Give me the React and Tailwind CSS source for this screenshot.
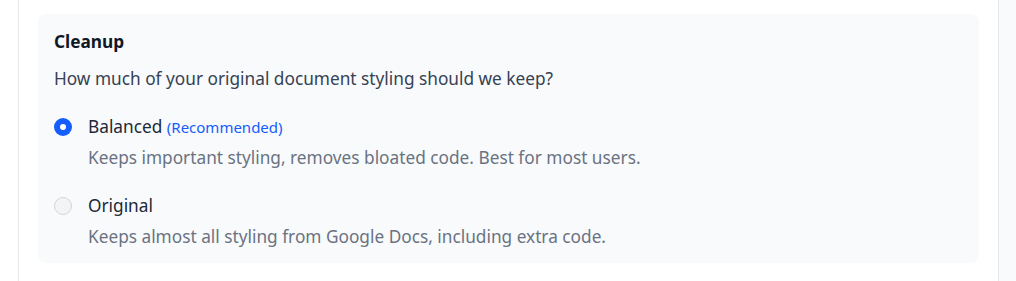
import { useState } from 'react';

const opciones = [
  {
    id: 'balanced',
    titulo: 'Balanced',
    extra: '(Recommended)',
    desc: 'Keeps important styling, removes bloated code. Best for most users.',
  },
  {
    id: 'original',
    titulo: 'Original',
    desc: 'Keeps almost all styling from Google Docs, including extra code.',
  },
];

export default function App() {
  const [modo, setModo] = useState('balanced');

  return (
    <div className="h-[281px] flex bg-[#f8fafc] overflow-hidden" style={{ fontFamily: '"Noto Sans", sans-serif' }}>
      <div className="w-[18px] shrink-0 bg-white" />
      <main className="w-[981px] shrink-0 bg-white border-x border-gray-200 px-[19px] pt-[14px]">
        {/* TARJETA DE LIMPIEZA */}
        <section className="bg-[#f8fafc] rounded-lg px-4 pt-4 pb-[14px]">
          <h3 className="text-[17.25px] leading-6 font-bold text-gray-900">Cleanup</h3>
          <p className="mt-[13px] text-[17.25px] leading-6 text-gray-700">
            How much of your original document styling should we keep?
          </p>

          <div className="mt-6 flex flex-col gap-6">
            {opciones.map((op) => {
              const activo = modo === op.id;
              return (
                <label key={op.id} className="flex flex-col cursor-pointer" onClick={() => setModo(op.id)}>
                  <div className="flex items-center gap-4 h-6">
                    {activo ? (
                      <span className="w-[18px] h-[18px] rounded-full bg-blue-600 flex items-center justify-center shrink-0">
                        <span className="w-[6px] h-[6px] rounded-full bg-white" />
                      </span>
                    ) : (
                      <span className="w-[18px] h-[18px] rounded-full bg-gray-100 border border-gray-300 shrink-0" />
                    )}
                    <span className="text-[17.25px] leading-6 text-gray-800">
                      {op.titulo}
                      {op.extra && <>{' '}<span className="text-[15px] text-blue-600">{op.extra}</span></>}
                    </span>
                  </div>
                  <p className="mt-[7px] ml-[34px] text-[17.25px] leading-6 text-gray-500">{op.desc}</p>
                </label>
              );
            })}
          </div>
        </section>
      </main>
    </div>
  );
}
